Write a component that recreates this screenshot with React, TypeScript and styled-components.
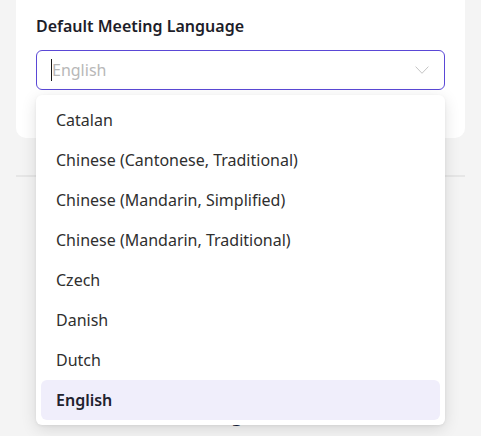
import React from 'react';
import styled, { createGlobalStyle } from 'styled-components';

const GlobalStyle = createGlobalStyle`
  html, body {
    margin: 0;
    padding: 0;
    background: #f4f4f4;
    font-family: 'Noto Sans', 'Liberation Sans', sans-serif;
  }
`;

const Page = styled.div`
  width: 481px;
  height: 436px;
  overflow: hidden;
  padding: 0 16px;
  box-sizing: border-box;
`;

const Card = styled.div`
  background: #ffffff;
  border-radius: 0 0 10px 10px;
  padding: 14px 20px 48px;
`;

const Label = styled.div`
  font-size: 16px;
  font-weight: 600;
  line-height: 24px;
  color: #1d1d29;
  margin-bottom: 12px;
`;

const SelectWrap = styled.div`
  position: relative;
`;

const Input = styled.div`
  height: 40px;
  box-sizing: border-box;
  border: 1px solid #5a48d6;
  border-radius: 6px;
  display: flex;
  align-items: center;
  padding: 0 14px 0 14px;
  background: #fff;
`;

const Caret = styled.span`
  width: 1px;
  height: 22px;
  background: #1a1a1a;
`;

const Placeholder = styled.span`
  flex: 1;
  font-size: 16px;
  color: #b8b8b8;
`;

const Chevron = styled.svg`
  width: 14px;
  height: 8px;
  margin-right: 1px;
`;

const Menu = styled.ul`
  position: absolute;
  top: 45px;
  left: 0;
  right: 0;
  margin: 0;
  padding: 5px;
  list-style: none;
  background: #fff;
  border-radius: 6px;
  box-shadow: 0 4px 16px rgba(0, 0, 0, 0.12), 0 1px 3px rgba(0, 0, 0, 0.06);
  z-index: 10;
`;

const Option = styled.li<{ $selected?: boolean }>`
  height: 40px;
  display: flex;
  align-items: center;
  padding: 0 15px;
  border-radius: 6px;
  font-size: 16px;
  color: ${(p) => (p.$selected ? '#22222e' : '#2f2f2f')};
  font-weight: ${(p) => (p.$selected ? 600 : 400)};
  background: ${(p) => (p.$selected ? '#f0eefb' : 'transparent')};
`;

const Divider = styled.hr`
  border: none;
  border-top: 2px solid #e6e6e6;
  margin: 37px 0 0;
`;

const Section = styled.div`
  text-align: center;
  padding-top: 226px;
  padding-right: 12px;
  font-size: 18px;
  font-weight: 700;
  color: #14203a;
`;

const languages = [
  'Catalan',
  'Chinese (Cantonese, Traditional)',
  'Chinese (Mandarin, Simplified)',
  'Chinese (Mandarin, Traditional)',
  'Czech',
  'Danish',
  'Dutch',
  'English',
];

export default function App() {
  return (
    <>
      <GlobalStyle />
      <Page>
        <Card>
          <Label>Default Meeting Language</Label>
          <SelectWrap>
            <Input>
              <Caret />
              <Placeholder>English</Placeholder>
              <Chevron viewBox="0 0 14 8">
                <path d="M0.6 0.6 L7 7.3 L13.4 0.6" fill="none" stroke="#c4c4c4" strokeWidth="1" />
              </Chevron>
            </Input>
            <Menu>
              {languages.map((l) => (
                <Option key={l} $selected={l === 'English'}>
                  {l}
                </Option>
              ))}
            </Menu>
          </SelectWrap>
        </Card>
        <Divider />
        <Section>Meeting Notes</Section>
      </Page>
    </>
  );
}
